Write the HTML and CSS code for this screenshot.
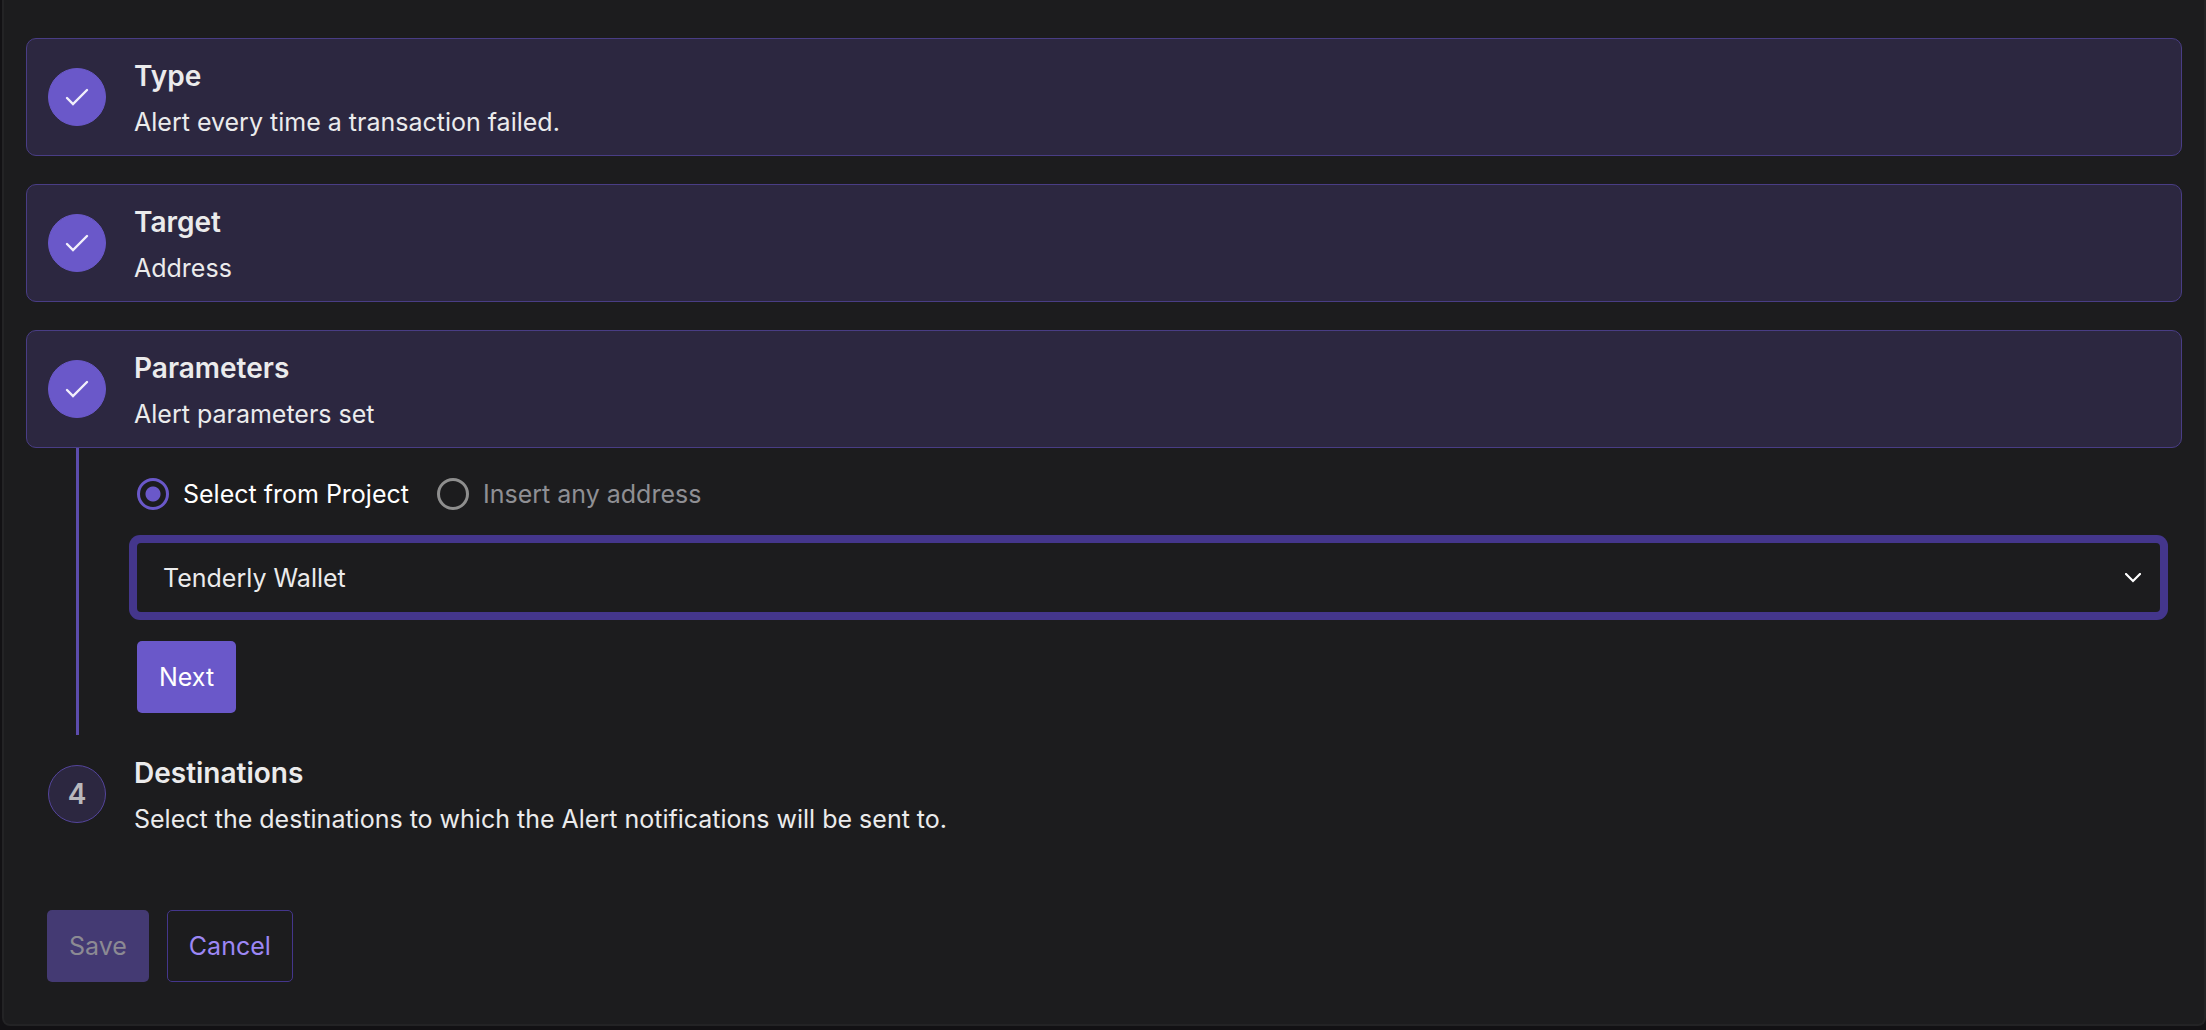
FILE: index.html
```html
<!DOCTYPE html>
<html lang="en">
<head>
    <meta charset="UTF-8">
    <meta name="viewport" content="width=device-width, initial-scale=1.0">
    <title>New Alert</title>
    <link rel="stylesheet" href="styles.css">
</head>
<body>
    <form class="panel">
        <div class="steps">
            <section class="step done">
                <span class="badge">
                    <svg width="24" height="24" viewBox="0 0 24 24"><path d="M2 13l6 6L22 5"/></svg>
                </span>
                <div class="step-text">
                    <h2>Type</h2>
                    <p>Alert every time a transaction failed.</p>
                </div>
            </section>

            <section class="step done">
                <span class="badge">
                    <svg width="24" height="24" viewBox="0 0 24 24"><path d="M2 13l6 6L22 5"/></svg>
                </span>
                <div class="step-text">
                    <h2>Target</h2>
                    <p>Address</p>
                </div>
            </section>

            <section class="step done">
                <span class="badge">
                    <svg width="24" height="24" viewBox="0 0 24 24"><path d="M2 13l6 6L22 5"/></svg>
                </span>
                <div class="step-text">
                    <h2>Parameters</h2>
                    <p>Alert parameters set</p>
                </div>
            </section>
        </div>

        <!-- Open content of the Parameters step -->
        <div class="step-content">
            <div class="radios">
                <label class="radio">
                    <input type="radio" name="source" value="project" checked>
                    <span>Select from Project</span>
                </label>
                <label class="radio">
                    <input type="radio" name="source" value="address">
                    <span>Insert any address</span>
                </label>
            </div>
            <div class="select">
                <select name="wallet" aria-label="Wallet">
                    <option>Tenderly Wallet</option>
                </select>
                <svg class="chevron" width="16" height="10" viewBox="0 0 16 10"><path d="M1 1l7 7 7-7"/></svg>
            </div>
            <button type="button" class="btn btn-primary">Next</button>
        </div>

        <section class="step">
            <span class="badge">4</span>
            <div class="step-text">
                <h2>Destinations</h2>
                <p>Select the destinations to which the Alert notifications will be sent to.</p>
            </div>
        </section>

        <div class="actions">
            <button type="submit" class="btn btn-primary" disabled>Save</button>
            <button type="button" class="btn btn-outline">Cancel</button>
        </div>
    </form>
</body>
</html>
```

FILE: styles.css
```css
* {
    box-sizing: border-box;
}

body {
    margin: 0;
    background-color: #121114;
    color: #ebebec;
    font-family: Inter, 'Liberation Sans', sans-serif;
    font-size: 25px;
    line-height: 32px;
}

.panel {
    margin: 0 0 0 2px;
    padding: 38px 22px 42px;
    background-color: #1c1c1e;
    border: 2px solid #232325;
    border-top: none;
    border-radius: 0 0 8px 8px;
}

/* Steps */
.steps {
    display: flex;
    flex-direction: column;
    gap: 28px;
}

.step {
    display: flex;
    align-items: center;
    gap: 28px;
    padding: 17px 21px;
    border: 1px solid transparent;
    border-radius: 10px;
}

.step.done {
    background-color: #2c2740;
    border-color: #493d85;
}

.step-text {
    display: flex;
    flex-direction: column;
    gap: 15px;
    padding-top: 5px;
}

h2 {
    margin: 0;
    font-size: 28px;
    font-weight: 600;
    line-height: 30px;
}

p {
    margin: 0;
}

.badge {
    display: flex;
    align-items: center;
    justify-content: center;
    flex: none;
    width: 58px;
    height: 58px;
    border: 1px solid #54459c;
    border-radius: 50%;
    background-color: #2c2740;
    color: #b9b8bd;
    font-size: 28px;
    font-weight: 600;
}

.done .badge {
    border-color: #6a58c9;
    background-color: #6a58c9;
}

.badge svg {
    fill: none;
    stroke: #f2f0fb;
    stroke-width: 2.4;
    stroke-linecap: round;
}

/* Content under the open step, joined to it by the line */
.step-content {
    margin: 0 22px 0 50px;
    padding: 30px 0 22px 58px;
    border-left: 3px solid #5c4cad;
}

.radios {
    display: flex;
    gap: 28px;
    margin-bottom: 33px;
}

.radio {
    display: flex;
    align-items: center;
    gap: 14px;
    color: #8f8f94;
}

.radio:has(:checked) {
    color: #ffffff;
}

.radio input {
    appearance: none;
    width: 32px;
    height: 32px;
    margin: 0;
    border: 3px solid #8e8e8e;
    border-radius: 50%;
}

.radio input:checked {
    border-color: #6a58c9;
    background: radial-gradient(circle, #6a58c9 7px, transparent 8px);
}

.select {
    position: relative;
    margin-bottom: 29px;
}

select {
    display: block;
    appearance: none;
    width: 100%;
    height: 69px;
    padding: 0 26px;
    border: none;
    border-radius: 4px;
    outline: none;
    box-shadow: 0 0 0 8px #44368c;
    background-color: #1c1c1e;
    color: #ebebec;
    font: inherit;
}

.chevron {
    position: absolute;
    right: 19px;
    top: 30px;
    fill: none;
    stroke: #ffffff;
    stroke-width: 2.2;
    stroke-linecap: round;
    pointer-events: none;
}

/* Buttons */
.btn {
    height: 72px;
    padding: 0 21px;
    border: 1px solid transparent;
    border-radius: 5px;
    font: inherit;
    cursor: pointer;
}

.btn-primary {
    background-color: #6a58c9;
    color: #ffffff;
}

.btn-primary:disabled {
    background-color: #443a73;
    color: #8c8a93;
    cursor: default;
}

.btn-outline {
    border-color: #44368c;
    background-color: transparent;
    color: #9c87f5;
}

.actions {
    display: flex;
    gap: 18px;
    margin-top: 57px;
    padding: 0 21px;
}
```
